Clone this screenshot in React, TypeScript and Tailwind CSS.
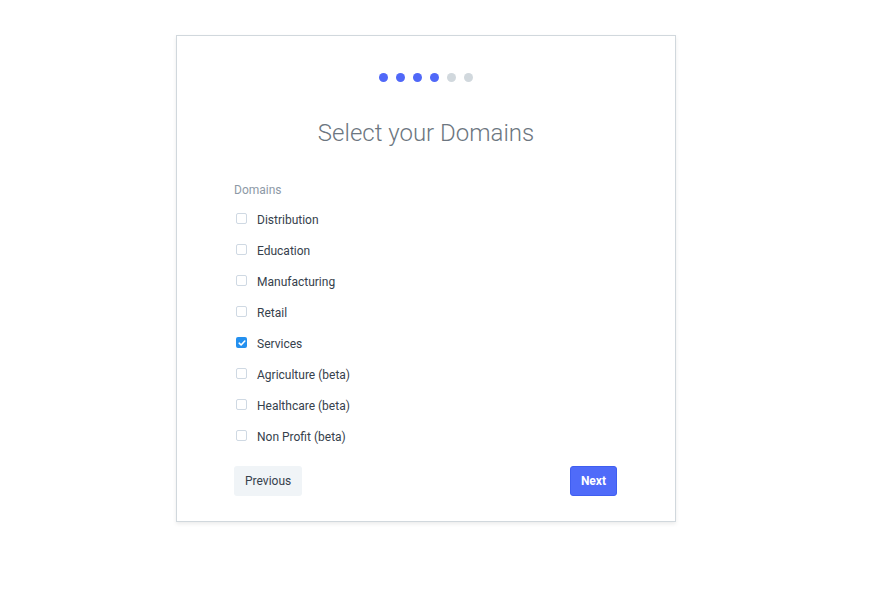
import { useState } from "react";

const domains = [
  "Distribution",
  "Education",
  "Manufacturing",
  "Retail",
  "Services",
  "Agriculture (beta)",
  "Healthcare (beta)",
  "Non Profit (beta)",
];

export default function App() {
  const [checked, setChecked] = useState<string[]>(["Services"]);

  const toggle = (d: string) =>
    setChecked((c) => (c.includes(d) ? c.filter((x) => x !== d) : [...c, d]));

  return (
    <div className="min-h-[616px] bg-white font-['Roboto',sans-serif] pt-[35px]">
      <div className="ml-[176px] w-[500px] border border-[#d1d8dd] bg-white shadow-[0_2px_4px_rgba(0,0,0,0.08)] px-[57px] pt-[37px] pb-[25px]">
        {/* progress */}
        <div className="flex justify-center gap-[8px] pr-[1px]">
          {[0, 1, 2, 3, 4, 5].map((i) => (
            <span
              key={i}
              className={
                i < 4
                  ? "w-[9px] h-[9px] rounded-full bg-[#5068f8]"
                  : "w-[9px] h-[9px] rounded-full bg-[#d1d8dd]"
              }
            />
          ))}
        </div>

        <h1 className="mt-[35px] text-center text-[24px] leading-[32px] font-light text-[#6c7680]">
          Select your Domains
        </h1>

        <div className="mt-[33px] text-[12px] leading-[16px] text-[#8d99a6]">Domains</div>

        <ul className="mt-[6px] flex flex-col">
          {domains.map((d) => {
            const on = checked.includes(d);
            return (
              <li key={d} className="h-[31px] flex items-center cursor-pointer" onClick={() => toggle(d)}>
                <span
                  className={
                    on
                      ? "ml-[2px] -mt-[2px] w-[11px] h-[11px] rounded-[2px] bg-[#2490ef] flex items-center justify-center"
                      : "ml-[2px] -mt-[2px] w-[11px] h-[11px] rounded-[2px] border border-[#cfd9e3] bg-white"
                  }
                >
                  {on && (
                    <svg width="8" height="8" viewBox="0 0 8 8" fill="none">
                      <path d="M1.2 4.2 3.1 6 6.8 2" stroke="white" strokeWidth="1.6" strokeLinecap="round" strokeLinejoin="round" />
                    </svg>
                  )}
                </span>
                <span className="ml-[10px] text-[12px] text-[#36414c]">{d}</span>
              </li>
            );
          })}
        </ul>

        <div className="mt-[14px] flex justify-between">
          <button className="h-[30px] px-[11px] rounded-[3px] bg-[#f0f4f7] text-[12px] text-[#36414c]">
            Previous
          </button>
          <button className="mr-[1px] h-[30px] px-[10px] rounded-[3px] bg-[#4f6bf9] border border-[#3f5ef0] text-[12px] font-bold text-white">
            Next
          </button>
        </div>
      </div>
    </div>
  );
}
